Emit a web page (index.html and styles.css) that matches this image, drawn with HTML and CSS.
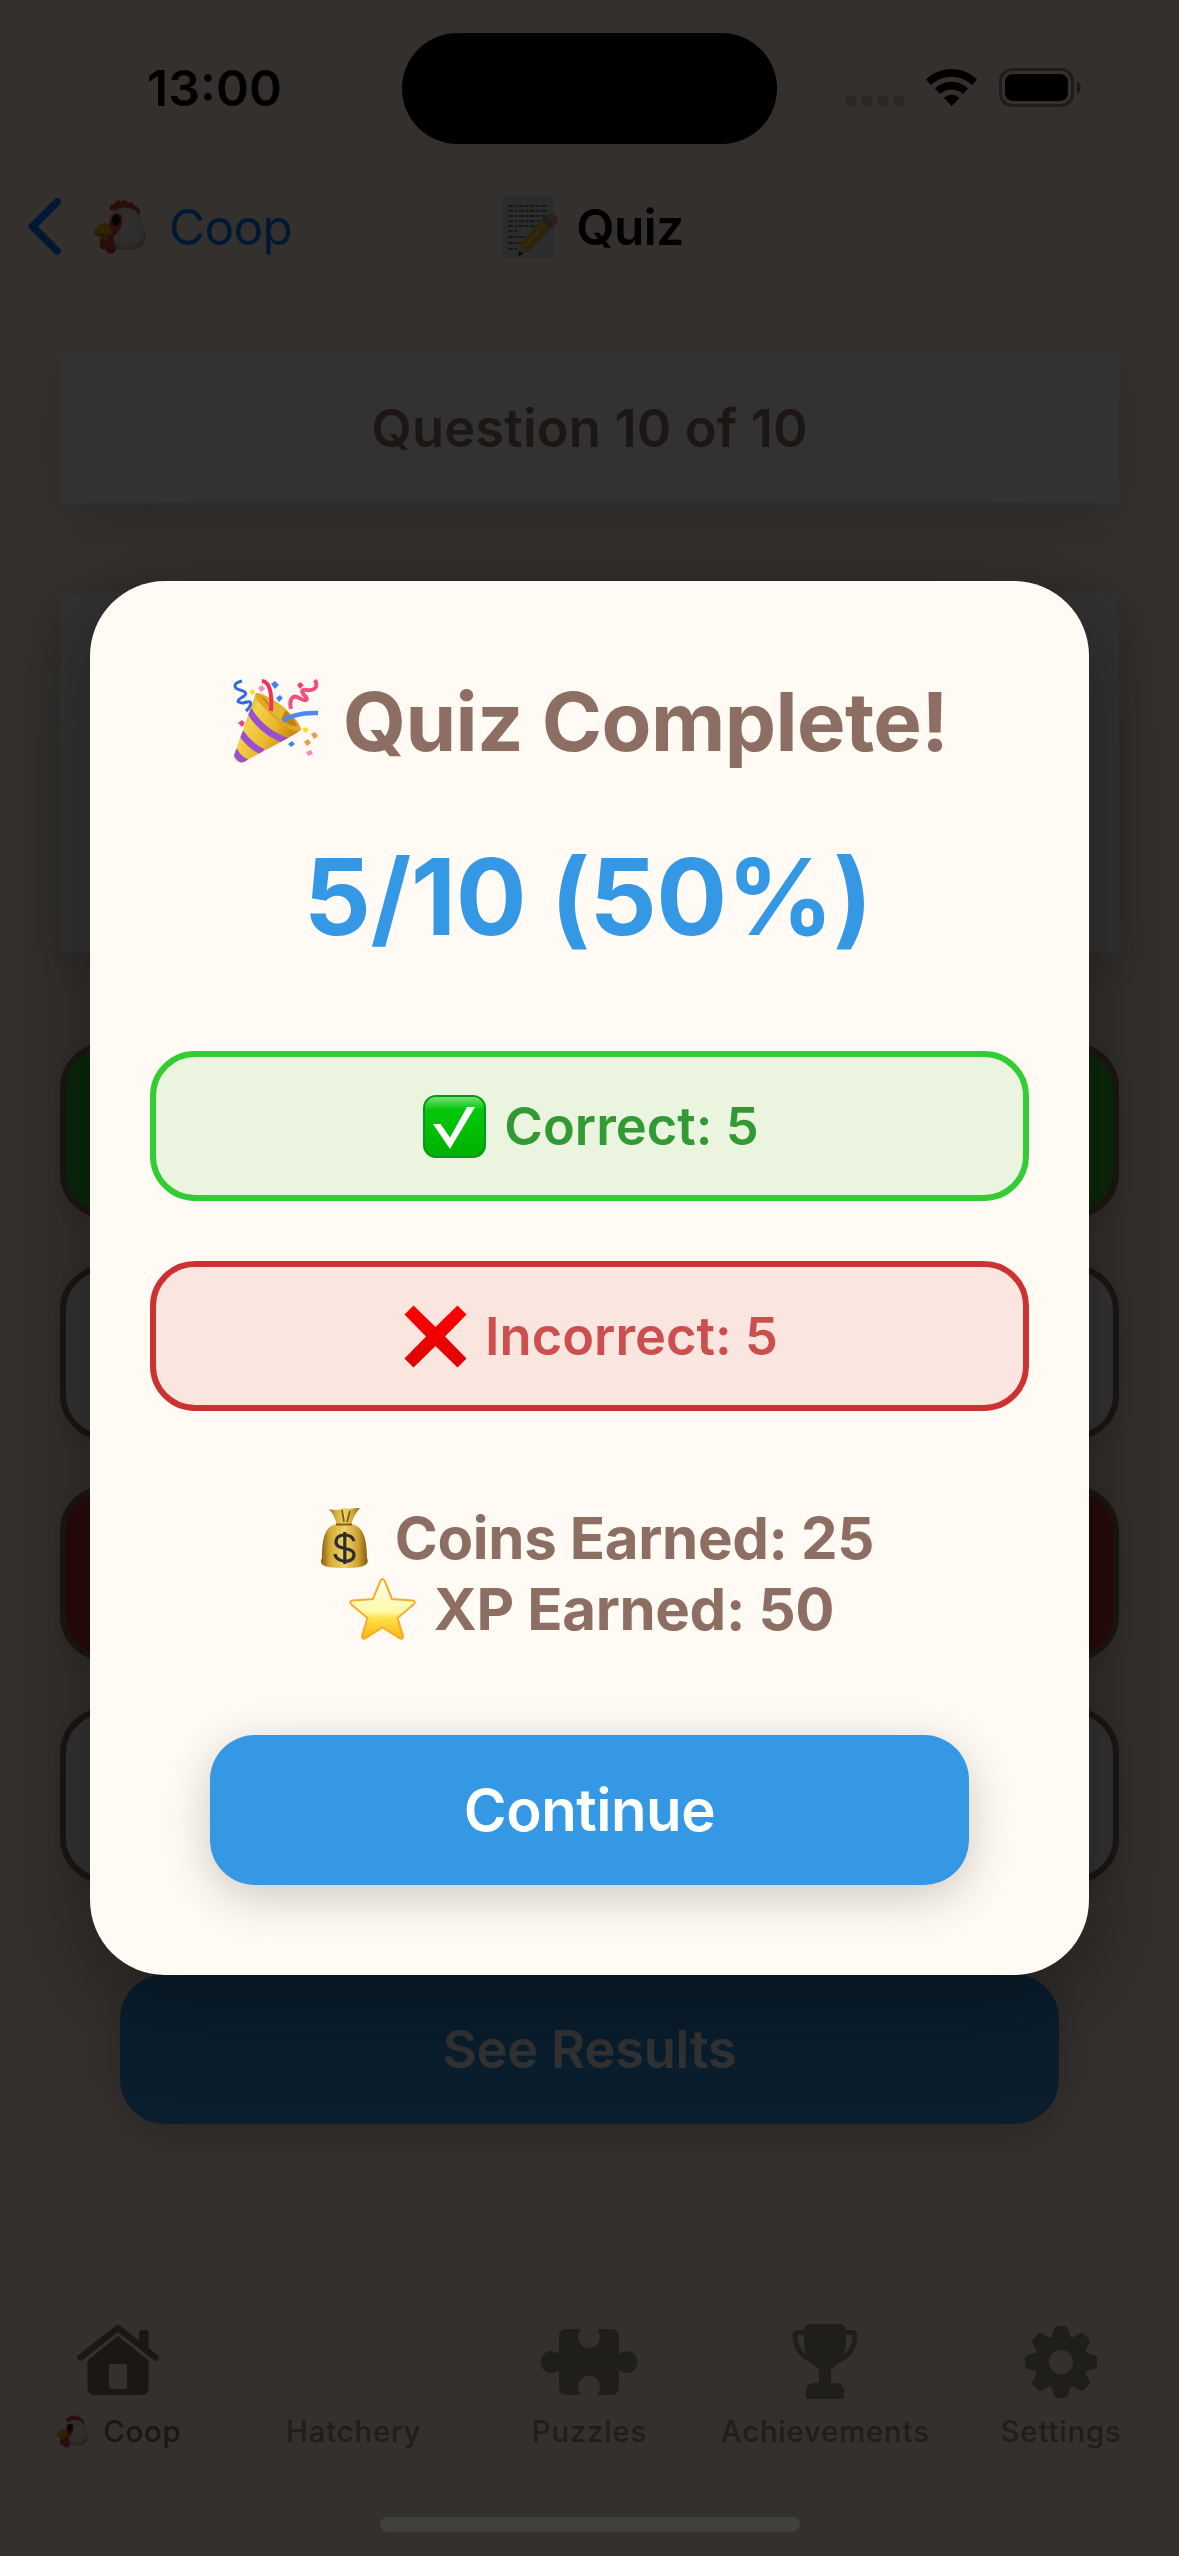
FILE: index.html
```html
<!DOCTYPE html>
<html lang="en">
<head>
<meta charset="utf-8">
<title>Quiz</title>
<link rel="stylesheet" href="styles.css">
</head>
<body>
<svg class="defs" width="0" height="0">
  <defs>
    <linearGradient id="wattle" x1="0" y1="0" x2="0" y2="1"><stop offset="0" stop-color="#e8473f"/><stop offset="1" stop-color="#c9302f"/></linearGradient>
    <radialGradient id="feather" cx=".5" cy=".45" r=".6"><stop offset="0" stop-color="#f6f3ee"/><stop offset=".75" stop-color="#dcd7d0"/><stop offset="1" stop-color="#a9a29a"/></radialGradient>
    <symbol id="hen" viewBox="0 0 53 54">
      <path d="M17 10c-1-5 2-7 4-5 0-4 5-6 7-3 2-3 6-2 7 1 3-2 6 0 6 3 4 0 7 4 6 9z" fill="#d9403c"/>
      <path d="M8 38c-2 3-2 9 1 11s5-3 3-11zM14 36c-2 6-4 14 1 17 5 2 9-1 8-7l-3-12z" fill="url(#wattle)"/>
      <path d="M16 18C20 9 28 6 36 8c9 2 14 10 16 22 2 13-3 19-15 20-8 0-16-1-19-5 4-8 1-16-2-27z" fill="url(#feather)"/>
      <path d="M29 17c1 8-2 14-9 20l3 12-6-6-2-16c2-7 5-13 10-13 3 0 4 1 4 3z" fill="#d9403c"/>
      <ellipse cx="23" cy="20" rx="4" ry="6" fill="#1a1413"/>
      <path d="M0 33c3-6 8-11 13-10 4 1 6 6 6 11-5 3-9 6-19-1z" fill="#e2b416"/>
      <path d="M0 33c7 2 11 1 19 1-5 5-12 5-19-1z" fill="#b98a0b"/>
    </symbol>
  </defs>
</svg>

<div class="screen">
  <header class="status">
    <div class="clock">13:00</div>
    <div class="island"></div>
    <div class="indicators">
      <div class="signal"><i></i><i></i><i></i><i></i></div>
      <svg class="wifi" viewBox="0 0 51 37"><path d="M0 10.500C14-3.500 37-3.500 51 10.500L46 16C34.500 5 16.500 5 5 16z"/><path d="M9 19.500C18 10.500 33 10.500 42 19.500L37 25C30.500 19 20.500 19 14 25z"/><path d="M18 29C22 24.500 29 24.500 33.500 29L25.700 37z"/></svg>
      <svg class="battery" viewBox="0 0 82 39"><rect x="1.500" y="1.500" width="72" height="36" rx="11.500" fill="none" stroke="#000" stroke-width="3" opacity=".4"/><rect x="6" y="6" width="63" height="27" rx="8"/><path d="M78 13c5 2.500 5 11 0 13z" opacity=".45"/></svg>
    </div>
  </header>

  <nav class="navbar">
    <a class="back">
      <svg class="chevron" viewBox="0 0 33 57"><path d="M29 4L4.500 28.500 29 53" fill="none" stroke="#007aff" stroke-width="7.500" stroke-linecap="round" stroke-linejoin="round"/></svg>
      <svg class="hen"><use href="#hen"/></svg>
      <span>Coop</span>
    </a>
    <h1 class="nav-title">
      <svg class="memo" viewBox="0 0 56 62">
        <path d="M0 0h52v62H0z" fill="#d5dde2"/>
        <g fill="none" stroke="#6f7880" stroke-width="1.800" stroke-dasharray="5 1.500 3 1.500"><path d="M6 10h40M6 15h40M6 20h40M6 25h38M6 30h34M6 35h10M6 41h20M6 47h15M6 53h10"/></g>
        <path d="M16 60l3-13L43 20l9 9-25 26z" fill="#e0ae22"/><path d="M22 51L46 24" stroke="#f2c843" stroke-width="4"/>
        <path d="M16 60l3-13 8 8z" fill="#e4bd8c"/><path d="M16 60l1-5 4 3z" fill="#222"/>
        <path d="M40 24l4-4 8 9-4 4z" fill="#8f969b"/><path d="M44 20c3-4 7-3 10 0s2 6-2 9z" fill="#ef8f98"/>
      </svg>
      <span>Quiz</span>
    </h1>
  </nav>

  <main class="quiz">
    <section class="card progress">Question 10 of 10</section>
    <section class="card question"></section>
    <ul class="answers">
      <li class="answer answer-right"></li>
      <li class="answer"></li>
      <li class="answer answer-wrong"></li>
      <li class="answer"></li>
    </ul>
    <button class="results">See Results</button>
  </main>

  <footer class="tabs">
    <a class="tab tab-active">
      <svg class="tab-icon" viewBox="0 0 100 76"><path d="M12.500 34.500L50 5l37.500 29.500" fill="none" stroke="currentColor" stroke-width="6.500" stroke-linecap="round" stroke-linejoin="round"/><path d="M71 23V10q0-3 3-3h3.500q3 0 3 3v21z"/><path fill-rule="evenodd" d="M50 13l30.500 24.500V65q0 7-7 7h-47q-7 0-7-7V37.500zM43 41q-2 0-2 2v21q0 2 2 2h14q2 0 2-2V43q0-2-2-2z"/></svg>
      <span class="label"><svg class="hen-small"><use href="#hen"/></svg>Coop</span>
    </a>
    <a class="tab">
      <span class="tab-icon"></span>
      <span class="label">Hatchery</span>
    </a>
    <a class="tab">
      <svg class="tab-icon" viewBox="0 0 100 76"><path d="M28 6H40.500q1.500 0 .8 1.500A11 11 0 1 0 58.700 7.500Q58 6 59.500 6H72q8 0 8 8V29q0 2 2 1A10.500 11 0 1 1 82 48q-2-1-2 1V64q0 8-8 8H59.500q-1.500 0-.8-1.500A11 11 0 1 0 41.300 70.500Q42 72 40.500 72H28q-8 0-8-8V49q0-2-2-1A10.500 11 0 1 1 18 30q2 1 2-1V14q0-8 8-8z"/></svg>
      <span class="label">Puzzles</span>
    </a>
    <a class="tab">
      <svg class="tab-icon" viewBox="0 0 100 76"><path d="M34 1h32q5 1 5 6v13q-1 15-8 21-5 3-7 6v13h6q7 1 7 8v6q0 2-2 2H33q-2 0-2-2v-6q0-7 7-8h6V47q-2-3-7-6-7-6-8-21V7q0-5 5-6z"/><path d="M30 9.500h-7q-3 0-3 3c0 13 6 21 19 26M70 9.500h7q3 0 3 3c0 13-6 21-19 26" fill="none" stroke="currentColor" stroke-width="5"/></svg>
      <span class="label">Achievements</span>
    </a>
    <a class="tab">
      <svg class="tab-icon" viewBox="0 0 100 76"><defs><path id="tooth" d="M40 16l3.500-11q.8-2 3-2h7q2.200 0 3 2L60 16z"/></defs><path fill-rule="evenodd" d="M50 12a27 27 0 1 0 .01 0zM50 27a12 12 0 1 1-.01 0z"/><use href="#tooth"/><use href="#tooth" transform="rotate(45 50 39)"/><use href="#tooth" transform="rotate(90 50 39)"/><use href="#tooth" transform="rotate(135 50 39)"/><use href="#tooth" transform="rotate(180 50 39)"/><use href="#tooth" transform="rotate(225 50 39)"/><use href="#tooth" transform="rotate(270 50 39)"/><use href="#tooth" transform="rotate(315 50 39)"/></svg>
      <span class="label">Settings</span>
    </a>
  </footer>
</div>

<div class="overlay">
  <section class="modal">
    <h2 class="title">
      <svg class="party" viewBox="0 0 84 84">
        <defs><linearGradient id="cone" x1="0" y1="0" x2="1" y2=".6"><stop offset="0" stop-color="#b97a10"/><stop offset=".35" stop-color="#f5d24a"/><stop offset=".65" stop-color="#e9b92c"/><stop offset="1" stop-color="#b9770f"/></linearGradient><clipPath id="coneClip"><path d="M22 14C32 20 60 38 67 50 66 54 40 66 10 83 4 85-1 80 .5 75z"/></clipPath></defs>
        <path d="M22 14C32 20 60 38 67 50 66 54 40 66 10 83 4 85-1 80 .5 75z" fill="url(#cone)"/>
        <g clip-path="url(#coneClip)" fill="none" stroke="#9a4fd0" stroke-width="6.500"><path d="M15 31q12 22 40 32M7 54q10 14 22 19M0 71q4 9 14 13"/></g>
        <path d="M22 14c8-2 42 22 45 36-2 6-17-1-29-13S19 18 22 14z" fill="#e2a622"/><path d="M27 17c10 1 32 17 36 30-5 1-14-4-24-14z" fill="#bf8217"/><path d="M27 17c6 3 10 9 11 17l9 7 5-11c-8-7-18-13-25-13z" fill="#e5b733"/>
        <path d="M28 2q11 1 9 30" fill="none" stroke="#f0305f" stroke-width="4"/>
        <path d="M49 42q12-9 35-8" fill="none" stroke="#4b8bee" stroke-width="4.500"/>
        <path d="M8 2C-1 4-1 9 6 11s8 4 1 8 0 6 6 4 4 5-1 9" fill="none" stroke="#2f6de0" stroke-width="3"/>
        <path d="M81 1c4 8-2 11-8 10s-6 2-2 6 1 6-6 2-10 2-8 11" fill="none" stroke="#f2507c" stroke-width="4"/>
        <g fill="#3e86ee"><path d="M37 5l4-3 4 4-4 4zM42 19l4-3 3 3-4 4zM54 65l4-3 3 3-4 3z"/></g>
        <g fill="#e9447a"><path d="M63 6l3-3 4 3-4 4zM4 44l4-3 3 3-3 4z"/></g>
        <g fill="#f08cc0"><path d="M24 9l4-3 3 4-4 3zM72 73l5-2 2 4-5 2z"/></g>
        <g fill="#f8dc2f"><path d="M15 13l4-3 2 4-3 2zM68 50l4-2 3 3-4 3z"/></g>
        <g fill="#f59a3c"><path d="M77 55l4-2 3 4-4 3zM70 63l4-3 3 4-4 3z"/></g>
      </svg>
      <span>Quiz Complete!</span>
    </h2>
    <p class="score">5/10 (50%)</p>
    <div class="tallies">
      <div class="tally tally-right">
        <svg class="mark" viewBox="0 0 63 63"><defs><linearGradient id="green" x1="0" y1="0" x2="0" y2="1"><stop offset="0" stop-color="#7fe37f"/><stop offset=".22" stop-color="#05c80c"/><stop offset="1" stop-color="#00b000"/></linearGradient></defs><rect x="1" y="1" width="61" height="61" rx="12" fill="url(#green)" stroke="#04991a" stroke-width="2"/><path d="M10 29h7.500L27 42.500 44 12h8L27 54z" fill="#fff"/></svg>
        <span>Correct: 5</span>
      </div>
      <div class="tally tally-wrong">
        <svg class="mark" viewBox="0 0 63 63"><defs><linearGradient id="red" x1="0" y1="0" x2="0" y2="1"><stop offset="0" stop-color="#ff0000"/><stop offset="1" stop-color="#dd0000"/></linearGradient></defs><path d="M9.500.500L31.500 22 53.500.500 62.500 9.500 41 31.500 62.500 53.500 53.500 62.500 31.500 41 9.500 62.500.500 53.500 22 31.500.500 9.500z" fill="url(#red)"/></svg>
        <span>Incorrect: 5</span>
      </div>
    </div>
    <div class="rewards">
      <p class="reward coins">
        <svg class="reward-icon" viewBox="0 0 76 62"><defs><linearGradient id="sack" x1="0" y1="0" x2="1" y2="0"><stop offset="0" stop-color="#8a5c16"/><stop offset=".2" stop-color="#d3ab36"/><stop offset=".5" stop-color="#ecd469"/><stop offset=".8" stop-color="#cda02f"/><stop offset="1" stop-color="#87550f"/></linearGradient></defs><path d="M21 2q6 2 12 0 3-2 7 0 5-1 12-1-6 6-9 17H29Q26 7 21 2z" fill="url(#sack)"/><path d="M29 17h14c12 2 16 14 16 34 4 9-9 10-23 10s-27-1-22-10c0-20 3-32 15-34z" fill="url(#sack)"/><path d="M28 17.500h16M34 3l2 12M42 4l-3 11" stroke="#8a5a18" stroke-width="1.800"/><path d="M46 34q-2-6-9-6-9 0-9 7c0 9 18 4 18 13 0 9-18 8-19-1M36.800 25v32" fill="none" stroke="#302c2e" stroke-width="3.200"/></svg>
        <span>Coins Earned: 25</span>
      </p>
      <p class="reward xp">
        <svg class="reward-icon" viewBox="0 0 76 62"><defs><linearGradient id="gold" x1="0" y1="0" x2="0" y2="1"><stop offset="0" stop-color="#fffef0"/><stop offset=".55" stop-color="#fff9a8"/><stop offset=".66" stop-color="#ffe048"/><stop offset="1" stop-color="#fdb515"/></linearGradient></defs><path d="M35.500 2.500q2-3 4 0l7.500 18.500 20.500 1.500q4 1 1 4L52.500 40l5.500 18q0 4-4 2L37.500 49.500 21 60q-4 2-4-2l5.500-18L6.500 26.500q-3-3 1-4L28 21z" fill="url(#gold)" stroke="#f6ad2c" stroke-width="2"/></svg>
        <span>XP Earned: 50</span>
      </p>
    </div>
    <button class="continue">Continue</button>
  </section>
</div>
<div class="home-indicator"></div>
</body>
</html>
```
FILE: styles.css
```css
* { box-sizing: border-box; margin: 0; padding: 0; }
html, body { width: 1179px; height: 2556px; overflow: hidden; }
body { position: relative; font-family: Inter, "Liberation Sans", sans-serif; background: #fff0e1; }
.defs { position: absolute; }
svg { display: block; flex: none; overflow: visible; }
button { font-family: inherit; border: 0; display: flex; align-items: center; justify-content: center; }

.screen { width: 1179px; height: 2556px; display: flex; flex-direction: column; background: #fff0e1; }

.status { display: grid; grid-template-columns: 402px 375px 402px; height: 154px; padding-top: 33px; align-items: start; }
.clock { padding: 24px 0 0 147px; font-size: 50px; line-height: 62px; font-weight: 600; color: #000; }
.island { height: 111px; border-radius: 56px; background: #000; }
.indicators { display: flex; align-items: flex-end; height: 74px; padding-left: 69px; }
.signal { display: flex; gap: 6px; width: 80px; padding-bottom: 1px; }
.signal i { width: 10px; height: 10px; border-radius: 3px; background: rgba(0, 0, 0, .2); }
.wifi { width: 51px; height: 37px; margin-right: 22px; margin-bottom: 1px; }
.battery { width: 82px; height: 39px; }

.navbar { display: grid; grid-template-columns: 1fr auto 1fr; height: 146px; align-items: center; font-size: 49.5px; line-height: 62px; border-bottom: 1px solid #fdeae0; }
.back { display: flex; align-items: center; padding-left: 28px; color: #007aff; letter-spacing: -.7px; }
.chevron { width: 33px; height: 57px; margin-right: 32px; }
.hen { width: 53px; height: 54px; margin-right: 23px; }
.nav-title { display: flex; align-items: center; padding-left: 7px; font-size: 49.5px; font-weight: 600; color: #000; letter-spacing: -.5px; }
.memo { width: 56px; height: 62px; margin-right: 18px; }

.quiz { flex: 1; padding: 53px 60px 0; }
.card { background: #fdfbf8; box-shadow: 0 12px 48px rgba(0, 0, 0, .16); }
.progress { height: 150px; display: flex; align-items: center; justify-content: center; font-size: 52.5px; font-weight: 600; color: #8d6e63; letter-spacing: .1px; }
.question { height: 359px; margin-top: 90px; }
.answers { list-style: none; margin-top: 91px; display: grid; gap: 46.5px; }
.answer { height: 175px; border: 6px solid #8d6e63; border-radius: 45px; background: #fff; box-shadow: 0 6px 24px rgba(0, 0, 0, .12); }
.answer-right { background: #32cd32; }
.answer-wrong { background: #cd3232; }
.results { width: 939px; height: 150px; margin: 91px auto 0; border-radius: 45px; background: #3498e5; color: #fff; font-size: 52.4px; font-weight: 600; letter-spacing: -.2px; box-shadow: 0 12px 48px rgba(0, 0, 0, .2); }

.tabs { display: grid; grid-template-columns: repeat(5, 1fr); height: 233px; }
.tab { display: flex; flex-direction: column; align-items: center; color: #a09485; fill: currentColor; }
.tab-active { color: #8d6e63; }
.tab-icon { width: 100px; height: 76px; }
.label { display: flex; align-items: center; height: 36px; font-size: 29.2px; font-weight: 500; margin-top: 14px; letter-spacing: .9px; }
.hen-small { width: 32px; height: 33px; margin-right: 15px; }
.tab-active .label { padding-left: 2px; }

.overlay { position: absolute; inset: 0; display: flex; align-items: center; justify-content: center; background: rgba(0, 0, 0, .8); }
.modal { width: 999px; height: 1394px; padding: 90px 60px; border-radius: 75px; background: #fffaf3; color: #8d6e63; box-shadow: 0 24px 96px rgba(0, 0, 0, .36); }
.title { display: flex; align-items: center; justify-content: center; height: 100px; padding-left: 3px; font-size: 81.5px; font-weight: 700; letter-spacing: -.6px; }
.party { width: 84px; height: 84px; margin-right: 25px; }
.score { height: 129px; line-height: 129px; margin-top: 61px; text-align: center; font-size: 105.2px; font-weight: 700; letter-spacing: -.5px; padding-right: 3px; color: #3498e5; font-feature-settings: "calt" 0; }
.tallies { display: grid; gap: 60px; margin-top: 90px; }
.tally { height: 150px; display: flex; align-items: center; justify-content: center; padding-left: 3px; border: 6px solid; border-radius: 45px; font-size: 52.4px; font-weight: 600; }
.tally-right { background: #ebf4df; border-color: #32cd32; }
.tally-wrong { background: #fae6df; border-color: #cd3232; }
.tally-right span { color: #339933; }
.tally-wrong span { color: #cc4e4e; }
.mark { width: 63px; height: 63px; margin-right: 18px; }
.rewards { margin-top: 91px; }
.reward { display: flex; align-items: center; justify-content: center; height: 71px; font-size: 58.2px; font-weight: 700; letter-spacing: -.35px; }
.reward-icon { width: 76px; height: 62px; margin-right: 11px; }
.coins { padding-left: 3px; }
.xp .reward-icon { margin-right: 13px; }
.continue { width: 759px; height: 150px; margin: 91px auto 0; border-radius: 45px; background: #3498e5; color: #fff; font-size: 58.2px; font-weight: 600; letter-spacing: -.5px; box-shadow: 0 12px 48px rgba(0, 0, 0, .2); }

.home-indicator { position: absolute; left: 380px; top: 2517px; width: 420px; height: 15px; border-radius: 8px; background: #40403e; }
```
